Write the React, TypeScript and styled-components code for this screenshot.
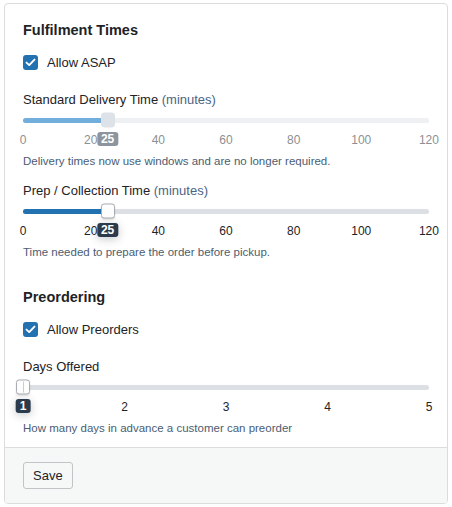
import React from "react";
import styled, { createGlobalStyle, css } from "styled-components";

const Global = createGlobalStyle`
  html, body { margin: 0; padding: 0; background: #ffffff; }
  body {
    font-family: "Liberation Sans", Arial, Helvetica, sans-serif;
    color: #1d2327;
    -webkit-font-smoothing: antialiased;
  }
`;

const Page = styled.div`
  padding: 3px 4px 0 4px;
`;

const Card = styled.div`
  width: 444px;
  box-sizing: border-box;
  border: 1px solid #dcdcde;
  border-radius: 4px;
  background: #fff;
  overflow: hidden;
`;

const Body = styled.div`
  padding: 16px 18px 11px 18px;
  display: flex;
  flex-direction: column;
`;

const Heading = styled.h2<{ $gap?: number }>`
  margin: ${(p) => p.$gap ?? 0}px 0 0 0;
  font-size: 14.5px;
  line-height: 20px;
  font-weight: 700;
  color: #1d2327;
`;

const CheckRow = styled.label`
  margin-top: 12px;
  display: flex;
  align-items: center;
  gap: 9px;
  height: 20px;
  font-size: 13px;
  color: #1d2327;
`;

const Box = styled.span`
  width: 15px;
  height: 15px;
  border-radius: 3px;
  background: #2271b1;
  display: inline-flex;
  align-items: center;
  justify-content: center;
  flex-shrink: 0;
`;

const FieldLabel = styled.div<{ $gap: number }>`
  margin-top: ${(p) => p.$gap}px;
  font-size: 13px;
  line-height: 18px;
  color: #1d2327;
`;

const Unit = styled.span`
  color: #4b6584;
`;

const Help = styled.p`
  margin: 5px 0 0 0;
  font-size: 11.5px;
  line-height: 16px;
  color: #4b5d72;
`;

const SliderArea = styled.div`
  position: relative;
  height: 18px;
  margin-top: 2px;
  display: flex;
  align-items: center;
`;

type Variant = "disabled" | "active";

const Track = styled.div<{ $v: Variant }>`
  position: relative;
  flex: 1;
  height: 5px;
  border-radius: 3px;
  background: ${(p) => (p.$v === "disabled" ? "#eef0f3" : "#dcdfe3")};
`;

const Fill = styled.div<{ $v: Variant }>`
  height: 100%;
  border-radius: 3px;
  background: ${(p) => (p.$v === "disabled" ? "#72aedb" : "#2271b1")};
`;

const Thumb = styled.div<{ $v: Variant }>`
  position: absolute;
  top: 50%;
  width: 14px;
  height: 15px;
  transform: translate(-50%, -50%);
  border-radius: 3px;
  box-sizing: border-box;
  ${(p) =>
    p.$v === "disabled"
      ? css`
          background: #dde2e8;
          border: 1px solid #dde2e8;
        `
      : css`
          background: #fdfdfd;
          border: 1px solid #a9adb2;
          box-shadow: 0 1px 2px rgba(0, 0, 0, 0.12);
        `}
`;

const Grip = styled.span`
  position: absolute;
  left: 50%;
  top: 1px;
  bottom: 1px;
  width: 1px;
  background: #c9ccd0;
`;

const Tip = styled.div<{ $v: Variant }>`
  position: absolute;
  top: 21px;
  transform: translateX(-50%);
  height: 14px;
  padding: 0 4px;
  border-radius: 3px;
  font-size: 12px;
  font-weight: 700;
  line-height: 14px;
  color: #fff;
  white-space: nowrap;
  z-index: 2;
  background: ${(p) => (p.$v === "disabled" ? "#8c959e" : "#2c3b4b")};
  box-shadow: ${(p) =>
    p.$v === "disabled" ? "none" : "0 2px 8px rgba(30, 40, 55, 0.25)"};
`;

const Ticks = styled.div<{ $v: Variant }>`
  display: flex;
  justify-content: space-between;
  height: 16px;
  margin-top: 3px;
  font-size: 12px;
  line-height: 16px;
  color: ${(p) => (p.$v === "disabled" ? "#8c8f94" : "#1d2327")};
`;

const Tick = styled.span`
  width: 0;
  display: flex;
  justify-content: center;
  white-space: nowrap;
`;

const Footer = styled.div`
  border-top: 1px solid #dcdcde;
  background: #f6f7f7;
  padding: 14px 18px 14px 18px;
  display: flex;
`;

const Button = styled.button`
  height: 27px;
  padding: 0 9px;
  border: 1px solid #c3c4c7;
  border-radius: 3px;
  background: #f6f7f7;
  font-family: inherit;
  font-size: 13px;
  color: #1d2327;
`;

function Check() {
  return (
    <Box>
      <svg width="11" height="9" viewBox="0 0 11 9" fill="none">
        <path
          d="M1.5 4.6 L4.2 7.1 L9.5 1.6"
          stroke="#fff"
          strokeWidth="1.9"
          strokeLinecap="round"
          strokeLinejoin="round"
        />
      </svg>
    </Box>
  );
}

interface SliderProps {
  min: number;
  max: number;
  value: number;
  ticks: number[];
  variant: Variant;
  grip?: boolean;
}

function Slider({ min, max, value, ticks, variant, grip }: SliderProps) {
  const pct = ((value - min) / (max - min)) * 100;
  return (
    <>
      <SliderArea>
        <Track $v={variant}>
          <Fill $v={variant} style={{ width: `${pct}%` }} />
          <Thumb $v={variant} style={{ left: `${pct}%` }}>
            {grip && <Grip />}
          </Thumb>
        </Track>
        <Tip $v={variant} style={{ left: `${pct}%` }}>
          {value}
        </Tip>
      </SliderArea>
      <Ticks $v={variant}>
        {ticks.map((t) => (
          <Tick key={t}>{t === value && variant === "active" && t === min ? "" : t}</Tick>
        ))}
      </Ticks>
    </>
  );
}

export default function App() {
  return (
    <>
      <Global />
      <Page>
        <Card>
          <Body>
            <Heading>Fulfilment Times</Heading>
            <CheckRow>
              <Check />
              Allow ASAP
            </CheckRow>
            <FieldLabel $gap={19}>
              Standard Delivery Time <Unit>(minutes)</Unit>
            </FieldLabel>
            <Slider
              min={0}
              max={120}
              value={25}
              ticks={[0, 20, 40, 60, 80, 100, 120]}
              variant="disabled"
            />
            <Help>Delivery times now use windows and are no longer required.</Help>
            <FieldLabel $gap={13}>
              Prep / Collection Time <Unit>(minutes)</Unit>
            </FieldLabel>
            <Slider
              min={0}
              max={120}
              value={25}
              ticks={[0, 20, 40, 60, 80, 100, 120]}
              variant="active"
            />
            <Help>Time needed to prepare the order before pickup.</Help>
            <Heading $gap={27}>Preordering</Heading>
            <CheckRow>
              <Check />
              Allow Preorders
            </CheckRow>
            <FieldLabel $gap={19}>Days Offered</FieldLabel>
            <Slider
              min={1}
              max={5}
              value={1}
              ticks={[1, 2, 3, 4, 5]}
              variant="active"
              grip
            />
            <Help>How many days in advance a customer can preorder</Help>
          </Body>
          <Footer>
            <Button>Save</Button>
          </Footer>
        </Card>
      </Page>
    </>
  );
}
